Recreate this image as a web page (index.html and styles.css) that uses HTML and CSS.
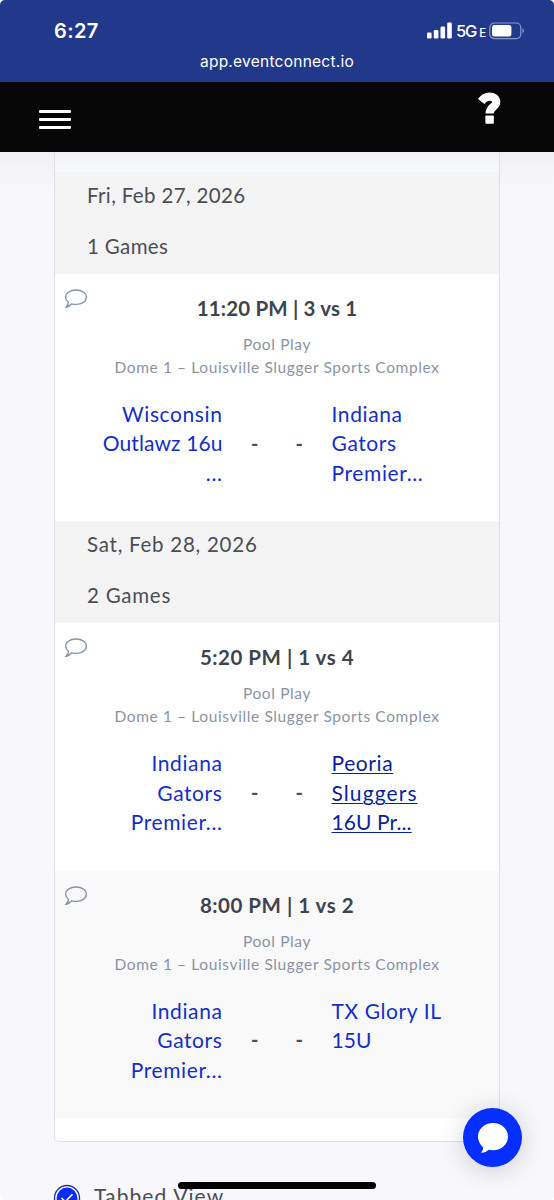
FILE: index.html
```html
<!DOCTYPE html>
<html lang="en">
<head>
    <meta charset="UTF-8">
    <meta name="viewport" content="width=device-width, initial-scale=1.0">
    <title>Schedule</title>
    <link rel="stylesheet" href="styles.css">
</head>
<body>

    <div class="statusbar">
        <div class="status-row">
            <span class="clock">6:27</span>
            <div class="status-icons">
                <svg width="26" height="17" viewBox="0 0 26 17" fill="#fff">
                    <rect x="0" y="10.5" width="4.6" height="6" rx="1.3"/>
                    <rect x="6.8" y="8" width="4.6" height="8.5" rx="1.3"/>
                    <rect x="13.5" y="4.5" width="4.6" height="12" rx="1.3"/>
                    <rect x="20.2" y="0.5" width="4.6" height="16" rx="1.3"/>
                </svg>
                <span class="network">5G<small>E</small></span>
                <svg class="battery" width="36" height="18" viewBox="0 0 36 18">
                    <rect x="0.8" y="1" width="31" height="15.6" rx="4.5" fill="none" stroke="#8a97cd" stroke-width="1.2"/>
                    <rect x="3" y="3" width="19.4" height="11.6" rx="2.5" fill="#fff"/>
                    <path d="M33.3 6.3 Q35 7 35 8.8 Q35 10.6 33.3 11.3Z" fill="#8a97cd"/>
                </svg>
            </div>
        </div>
        <div class="url">app.eventconnect.io</div>
    </div>

    <div class="navbar">
        <div class="menu"><span></span><span></span><span></span></div>
        <svg class="help" width="24" height="33" viewBox="0 0 24 33">
            <path d="M3.2 9.4 C5.8 6 8.6 4.6 11.4 4.6 C15.4 4.6 18.2 6.5 18.2 10 C18.2 15.2 11.6 14.6 11.6 21.6" fill="none" stroke="#fff" stroke-width="8.2"/>
            <rect x="7.4" y="23.4" width="8.4" height="8.4" rx="0.8" fill="#fff"/>
        </svg>
    </div>

    <div class="content">
        <div class="card">
            <div class="day">
                <p class="date">Fri, Feb 27, 2026</p>
                <p class="count">1 Games</p>
            </div>
            <div class="game">
                <svg class="comment" width="24" height="22" viewBox="0 0 24 22"><path d="M12 2 C18 2 22.3 5 22.3 9.2 C22.3 13.4 18 16.4 12 16.4 C10.4 16.4 9 16.2 7.7 15.8 C6.2 17.6 4.4 19 2.2 19.2 C3.4 17.8 4.6 16 4.4 14 C2.6 12.8 1.7 11.1 1.7 9.2 C1.7 5 6 2 12 2Z"/></svg>
                <h3 class="tight">11:20 PM | 3 vs 1</h3>
                <p class="pool">Pool Play</p>
                <p class="venue">Dome 1 – Louisville Slugger Sports Complex</p>
                <div class="teams">
                    <a class="home">Wisconsin<br><span class="tight">Outlawz 16u</span><br>...</a>
                    <b>-</b><b>-</b>
                    <a>Indiana<br>Gators<br>Premier...</a>
                </div>
            </div>
            <div class="day">
                <p class="date wide">Sat, Feb 28, 2026</p>
                <p class="count wide">2 Games</p>
            </div>
            <div class="game">
                <svg class="comment" width="24" height="22" viewBox="0 0 24 22"><path d="M12 2 C18 2 22.3 5 22.3 9.2 C22.3 13.4 18 16.4 12 16.4 C10.4 16.4 9 16.2 7.7 15.8 C6.2 17.6 4.4 19 2.2 19.2 C3.4 17.8 4.6 16 4.4 14 C2.6 12.8 1.7 11.1 1.7 9.2 C1.7 5 6 2 12 2Z"/></svg>
                <h3>5:20 PM | 1 vs 4</h3>
                <p class="pool">Pool Play</p>
                <p class="venue">Dome 1 – Louisville Slugger Sports Complex</p>
                <div class="teams">
                    <a class="home">Indiana<br>Gators<br>Premier...</a>
                    <b>-</b><b>-</b>
                    <a class="active">Peoria<br><span class="wide">Sluggers</span><br><span class="tight">16U Pr...</span></a>
                </div>
            </div>
            <div class="game alt">
                <svg class="comment" width="24" height="22" viewBox="0 0 24 22"><path d="M12 2 C18 2 22.3 5 22.3 9.2 C22.3 13.4 18 16.4 12 16.4 C10.4 16.4 9 16.2 7.7 15.8 C6.2 17.6 4.4 19 2.2 19.2 C3.4 17.8 4.6 16 4.4 14 C2.6 12.8 1.7 11.1 1.7 9.2 C1.7 5 6 2 12 2Z"/></svg>
                <h3>8:00 PM | 1 vs 2</h3>
                <p class="pool">Pool Play</p>
                <p class="venue">Dome 1 – Louisville Slugger Sports Complex</p>
                <div class="teams">
                    <a class="home">Indiana<br>Gators<br>Premier...</a>
                    <b>-</b><b>-</b>
                    <a>TX Glory IL<br><span class="tight">15U</span></a>
                </div>
            </div>
        </div>
        <div class="view-option">
            <svg width="28" height="28" viewBox="0 0 28 28">
                <circle cx="14" cy="14" r="12.5" fill="#fff" stroke="#1c35b8" stroke-width="1.4"/>
                <circle cx="14" cy="14" r="10.4" fill="#0a2cf5"/>
                <path d="M8.5 14 L12.3 17.6 L19.5 10.2" fill="none" stroke="#fff" stroke-width="1.6"/>
            </svg>
            <span>Tabbed View</span>
        </div>
    </div>

    <div class="home-bar"></div>
    <div class="chat">
        <svg width="32" height="32" viewBox="0 0 32 32"><path d="M16 1 C24.5 1 31 7 31 14.6 C31 22.4 24.5 28.3 16 28.3 C14.5 28.3 13 28.1 11.6 27.8 C9.6 29.6 7 30.9 4.9 30.8 C4.2 30.7 4.2 30 4.8 29.4 C5.8 28.4 6.2 27 6 25.2 C3 22.6 1 18.9 1 14.6 C1 7 7.5 1 16 1Z" fill="#fff"/></svg>
    </div>

</body>
</html>
```

FILE: styles.css
```css
* {
    box-sizing: border-box;
}
body {
    margin: 0;
    width: 554px;
    height: 1200px;
    overflow: hidden;
    background-color: #fff;
    font-family: Lato, sans-serif;
    color: #4b4e56;
    position: relative;
}
p, h3 {
    margin: 0;
    white-space: nowrap;
}
.statusbar {
    height: 82px;
    background-color: #22388b;
    border-radius: 5px 5px 0 0;
    color: #fff;
    font-family: Inter, sans-serif;
    padding-top: 18px;
}
.status-row {
    display: flex;
    justify-content: space-between;
    align-items: center;
    height: 25px;
    padding: 0 29px 0 54px;
}
.clock {
    font-size: 20px;
    font-weight: 600;
    letter-spacing: 0.4px;
}
.status-icons {
    display: flex;
    align-items: center;
}
.network {
    font-size: 16.5px;
    font-weight: 500;
    letter-spacing: -1.2px;
    width: 33px;
    margin-left: 3px;
    white-space: nowrap;
}
.network small {
    font-size: 11.5px;
    margin-left: 3px;
}
.url {
    margin-top: 9px;
    text-align: center;
    font-size: 15.5px;
    letter-spacing: 0.25px;
    line-height: 20px;
}
.navbar {
    height: 70px;
    background-color: #060606;
    display: flex;
    justify-content: space-between;
    padding: 10px 52px 0 39px;
}
.menu {
    display: flex;
    flex-direction: column;
    gap: 5px;
    padding-top: 18px;
}
.menu span {
    width: 32px;
    height: 3px;
    border-radius: 1px;
    background-color: #fff;
}
.content {
    height: 1048px;
    padding: 0 54px;
    background: linear-gradient(#f0f1f5, #f7f7fc 40px);
    overflow: hidden;
    border-radius: 0 0 5px 5px;
}
.card {
    height: 990px;
    padding-top: 20px;
    background: linear-gradient(#f1f2f5, #f7f8f9 20px, #fff 21px);
    border: 1px solid #dfe0e6;
    border-top: none;
    border-radius: 0 0 5px 5px;
}
.day {
    height: 101.8px;
    padding: 7px 32px;
    background-color: #f4f4f4;
    font-size: 20.5px;
    line-height: 32px;
}
.date {
    letter-spacing: 0.35px;
    margin-bottom: 19px;
}
.count {
    letter-spacing: 0.35px;
}
.day .wide {
    letter-spacing: 0.75px;
}
.game {
    position: relative;
    height: 247.5px;
    padding: 19px 10px 0;
    background-color: #fff;
    text-align: center;
}
.alt {
    background-color: #f9f9f9;
}
.comment {
    position: absolute;
    left: 9px;
    top: 14px;
    fill: none;
    stroke: #8793aa;
    stroke-width: 1.4;
}
h3 {
    font-size: 20.5px;
    line-height: 30px;
    letter-spacing: 0.5px;
    color: #40434c;
}
h3.tight {
    letter-spacing: 0.15px;
}
.pool, .venue {
    font-size: 15.5px;
    line-height: 23px;
    letter-spacing: 0.62px;
    color: #8b93a3;
}
.pool {
    margin-top: 10px;
}
.teams {
    display: grid;
    grid-template-columns: 1fr 44.5px 44.5px 1fr;
    margin-top: 20px;
    height: 89px;
    align-items: center;
    font-size: 20px;
    line-height: 29.6px;
}
.teams a {
    align-self: start;
    padding-left: 10px;
    text-align: left;
    font-size: 21px;
    letter-spacing: 0.6px;
    color: #142ec9;
}
.teams .tight {
    letter-spacing: 0.1px;
}
.teams .wide {
    letter-spacing: 1.1px;
}
.teams a.home {
    padding: 0 10px 0 0;
    text-align: right;
}
.teams a.active {
    color: #0a1f9c;
    text-decoration: underline;
    text-underline-offset: 2px;
    text-decoration-thickness: 1px;
}
.view-option {
    display: flex;
    align-items: center;
    gap: 13px;
    height: 28px;
    margin: 42px 0 0 -1px;
    font-size: 21px;
    line-height: 24px;
    letter-spacing: 1.1px;
}
.view-option span {
    margin-bottom: 5px;
}
.home-bar {
    position: absolute;
    left: 178px;
    top: 1182px;
    width: 198px;
    height: 7px;
    border-radius: 4px;
    background-color: #000;
}
.chat {
    position: absolute;
    left: 463px;
    top: 1108px;
    width: 59px;
    height: 59px;
    border-radius: 50%;
    background-color: #052eff;
    box-shadow: 0 3px 26px rgba(0, 0, 0, 0.18);
    display: flex;
    align-items: center;
    justify-content: center;
}
```
